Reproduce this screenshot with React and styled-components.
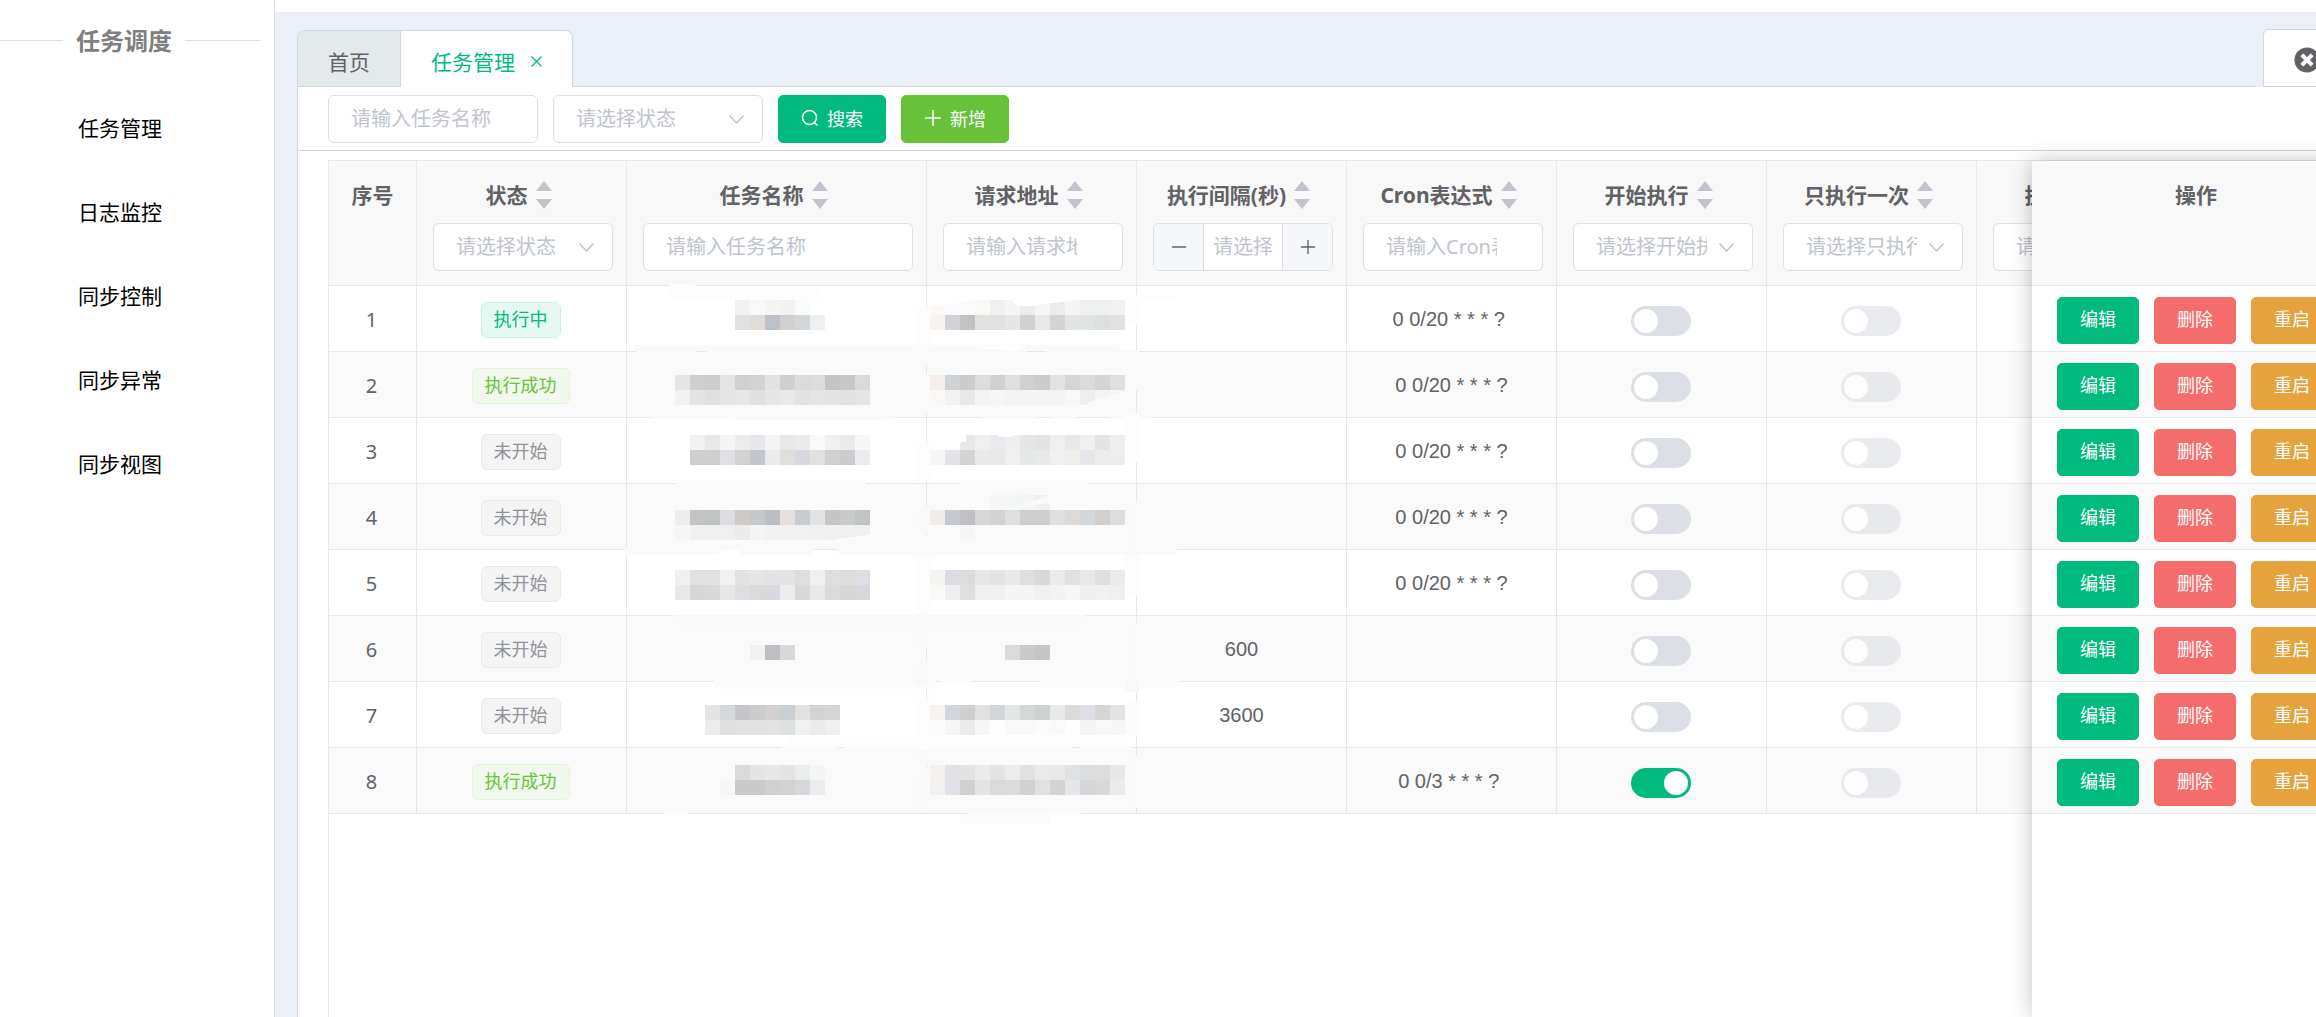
import React from "react";
import styled, { createGlobalStyle } from "styled-components";
import { FaTimesCircle } from "react-icons/fa";

const color = {
  primary: "#00bb7d",
  success: "#67c23a",
  danger: "#f56c6c",
  warning: "#e6a23c",
  text: "#606266",
  placeholder: "#c0c4cc",
  border: "#dcdfe6",
  frame: "#cfd7e5",
  grid: "#e8e8e8",
  canvas: "#eaeff8",
};

const GlobalStyle = createGlobalStyle`
  *, *::before, *::after { box-sizing: border-box; }
  body {
    margin: 0;
    background: #fff;
    color: ${color.text};
    font-family: "Noto Sans", "Noto Sans CJK SC", sans-serif;
    font-size: 20px;
  }
  button, input, select { font: inherit; margin: 0; }
`;

/* ---------- shell ---------- */

const Shell = styled.div`
  display: flex;
  height: 100vh;
  overflow: hidden;
`;

const Sidebar = styled.aside`
  flex: 0 0 275px;
  border-right: 1px solid ${color.border};
  background: #fff;
`;

const SidebarTitle = styled.h1`
  display: flex;
  align-items: center;
  gap: 13px;
  height: 80px;
  margin: 0 0 5px;
  padding-right: 14px;
  font-family: "Noto Sans CJK SC", sans-serif;
  font-size: 24px;
  font-weight: 700;
  line-height: 32px;
  color: #7f7f7f;
  &::before,
  &::after {
    content: "";
    height: 1px;
    background: ${color.border};
  }
  &::before { flex: 0 0 63px; }
  &::after { flex: 1; }
`;

const NavLink = styled.a`
  display: flex;
  align-items: center;
  height: 84px;
  padding-left: 78px;
  font-family: "Noto Sans CJK SC", sans-serif;
  font-size: 21px;
  color: #000;
  text-decoration: none;
`;

const Main = styled.main`
  display: flex;
  flex: 0 0 calc(100% - 200px);
  min-width: 0;
  flex-direction: column;
  padding-left: 22px;
  background: ${color.canvas};
`;

const TopBand = styled.div`
  flex: 0 0 12px;
  margin-left: -22px;
  background: #fff;
`;

/* ---------- tabs ---------- */

const TabBar = styled.div`
  display: flex;
  align-items: flex-end;
  margin-top: 17px;
`;

const TabGroup = styled.div`
  display: flex;
  height: 57px;
  overflow: hidden;
  border: 1px solid ${color.frame};
  border-bottom: 0;
  border-radius: 8px 8px 0 0;
`;

const Tab = styled.button`
  display: flex;
  align-items: center;
  gap: 16px;
  padding: 4px 30px 0;
  border: 0;
  font-size: 21px;
  color: ${(p) => (p.$active ? color.primary : color.text)};
  background: ${(p) => (p.$active ? "#fff" : "#e4e9ec")};
  ${(p) =>
    !p.$active &&
    `border-right: 1px solid ${color.frame}; border-bottom: 1px solid ${color.frame};`}
`;

const TabRule = styled.div`
  flex: 1;
  height: 57px;
  border-bottom: 1px solid ${color.frame};
`;

const TabAction = styled.button`
  display: flex;
  align-items: center;
  width: 98px;
  height: 58px;
  margin: 0 30px 0 7px;
  padding: 4px 0 0 30px;
  border: 1px solid ${color.frame};
  border-radius: 6px 6px 0 0;
  background: #fff;
  color: ${color.text};
`;

/* ---------- panel ---------- */

const Panel = styled.section`
  display: flex;
  flex: 1;
  flex-direction: column;
  min-height: 0;
  border-left: 1px solid ${color.frame};
  background: #fff;
`;

const Toolbar = styled.form`
  display: flex;
  gap: 15px;
  padding: 8px 30px 7px;
  border-bottom: 1px solid ${color.frame};
`;

const Field = styled.div`
  position: relative;
  width: ${(p) => p.$width || "100%"};
  height: 48px;
`;

const TextBox = styled.input`
  display: block;
  width: 100%;
  height: 48px;
  padding: 0 ${(p) => (p.$clearable ? 45 : 22)}px 2px 22px;
  border: 1px solid ${color.border};
  border-radius: 6px;
  background: #fff;
  color: ${color.text};
  &::placeholder { color: ${color.placeholder}; opacity: 1; }
`;

const SelectBox = styled.select`
  display: block;
  width: 100%;
  height: 48px;
  padding: 0 45px 2px 22px;
  border: 1px solid ${color.border};
  border-radius: 6px;
  background: #fff;
  color: ${color.placeholder};
  appearance: none;
`;

const Chevron = styled.svg`
  position: absolute;
  top: 16px;
  right: 18px;
  width: 17px;
  height: 17px;
  pointer-events: none;
`;

const Button = styled.button`
  display: inline-flex;
  align-items: center;
  justify-content: center;
  gap: 8px;
  height: ${(p) => (p.$small ? 47 : 48)}px;
  padding: 0 22px 2px;
  border: 1px solid ${(p) => color[p.$kind]};
  border-radius: 5px;
  background: ${(p) => color[p.$kind]};
  color: #fff;
  font-size: 18px;
  white-space: nowrap;
`;

/* ---------- table ---------- */

const Grid = styled.div`
  display: flex;
  flex: 1;
  min-height: 0;
  margin: 9px 30px 0;
  border: solid ${color.grid};
  border-width: 1px 0 0 1px;
`;

const ScrollPane = styled.div`
  position: relative;
  flex: 1;
  min-width: 0;
  overflow: hidden;
`;

const FixedPane = styled.div`
  position: relative;
  flex: 0 0 329px;
  background: #fff;
  box-shadow: 0 0 20px rgba(0, 0, 0, 0.24);
`;

const Table = styled.table`
  width: ${(p) => p.$width};
  table-layout: fixed;
  border-collapse: separate;
  border-spacing: 0;
`;

const HeadCell = styled.th`
  height: 125px;
  padding: 18px 13px 0 16px;
  border: solid ${color.grid};
  border-width: 0 1px 1px 0;
  background: #f8f8f8;
  font-weight: 400;
  text-align: center;
  vertical-align: top;
`;

const HeadLabel = styled.div`
  display: flex;
  align-items: center;
  justify-content: center;
  margin: 0 -13px 12px -16px;
  font-size: 21px;
  font-weight: 700;
  line-height: 32px;
  white-space: nowrap;
`;

const SortButton = styled.button`
  display: flex;
  width: 30px;
  padding: 0 6px 0 8px;
  border: 0;
  background: none;
`;

const Cell = styled.td`
  height: 66px;
  padding: 3px 2px 0 0;
  border: solid ${color.grid};
  border-width: 0 1px 1px 0;
  line-height: 30px;
  text-align: center;
  ${(p) => p.$plain && 'font-family: "Liberation Sans", Arial, sans-serif; padding: 0;'}
`;

const Row = styled.tr`
  background: #fff;
  &:nth-child(even) { background: #fafafa; }
`;

const tagTone = {
  running: `color: ${color.primary}; background: #e6f8f2; border-color: #ccf1e5;`,
  done: `color: ${color.success}; background: #f0f9eb; border-color: #e1f3d8;`,
  idle: `color: #909399; background: #f4f4f5; border-color: #e9e9eb;`,
};

const Tag = styled.span`
  display: inline-block;
  height: 36px;
  padding: 0 12px;
  border: 1px solid;
  border-radius: 6px;
  font-size: 18px;
  line-height: 33px;
  vertical-align: middle;
  ${(p) => tagTone[p.$tone]}
`;

const Switch = styled.input.attrs({ type: "checkbox", role: "switch" })`
  position: relative;
  display: block;
  width: 60px;
  height: 30px;
  margin: 1px auto 0;
  padding: 3px;
  border-radius: 15px;
  background: ${color.border};
  appearance: none;
  &::before {
    content: "";
    display: block;
    width: 24px;
    height: 24px;
    border-radius: 50%;
    background: #fff;
  }
  &:checked { background: ${color.primary}; }
  &:checked::before { margin-left: auto; }
  &:disabled { opacity: 0.6; }
`;

const Actions = styled.div`
  display: flex;
  justify-content: center;
  gap: 15px;
`;

const Stepper = styled.div`
  display: flex;
  height: 48px;
  overflow: hidden;
  border: 1px solid ${color.border};
  border-radius: 6px;
  background: #fff;
`;

const StepButton = styled.button`
  display: flex;
  flex: 0 0 49px;
  align-items: center;
  justify-content: center;
  padding: 0;
  border: 0;
  background: #f5f7fa;
`;

const StepInput = styled.input`
  flex: 1;
  min-width: 0;
  padding: 0 9px 2px;
  border: solid ${color.border};
  border-width: 0 1px;
  &::placeholder { color: ${color.placeholder}; opacity: 1; }
`;

/* Redaction layer lying over the name and address columns. */
const Redaction = styled.svg`
  position: absolute;
  top: 119px;
  left: 291px;
  width: 580px;
  height: 560px;
  pointer-events: none;
`;

/* ---------- data ---------- */

const menu = ["任务管理", "日志监控", "同步控制", "同步异常", "同步视图"];

const columns = [
  { title: "序号", width: 88 },
  { title: "状态", width: 210, filter: "select", hint: "请选择状态" },
  { title: "任务名称", width: 300, filter: "text", hint: "请输入任务名称" },
  { title: "请求地址", width: 210, filter: "text", hint: "请输入请求地址" },
  { title: "执行间隔(秒)", width: 210, filter: "number", hint: "请选择执行间隔" },
  { title: "Cron表达式", width: 210, filter: "text", hint: "请输入Cron表达式" },
  { title: "开始执行", width: 210, filter: "select", hint: "请选择开始执行" },
  { title: "只执行一次", width: 210, filter: "select", hint: "请选择只执行一次" },
  { title: "执行结果", width: 210, filter: "select", hint: "请选择执行结果" },
];

const tableWidth = columns.reduce((sum, c) => sum + c.width, 0);

const status = { running: "执行中", done: "执行成功", idle: "未开始" };

const rows = [
  { id: 1, status: "running", cron: "0 0/20 * * * ?\u00a0" },
  { id: 2, status: "done", cron: "0 0/20 * * * ?" },
  { id: 3, status: "idle", cron: "0 0/20 * * * ?" },
  { id: 4, status: "idle", cron: "0 0/20 * * * ?" },
  { id: 5, status: "idle", cron: "0 0/20 * * * ?" },
  { id: 6, status: "idle", interval: "600" },
  { id: 7, status: "idle", interval: "3600" },
  { id: 8, status: "done", cron: "0 0/3 * * * ?\u00a0", on: true },
];

/* Smears: x, y, width, height, fill */
const smears = [
  [50, 4, 25, 5, "#fdfdfd"], [50, 8, 150, 11, "#fdfdfd"],
  [14, 65, 485, 6, "#fafafa"], [16, 70, 61, 3, "#fafafa"], [87, 70, 319, 3, "#fafafa"],
  [426, 70, 92, 3, "#fafafa"], [30, 136, 245, 3, "#fafafa"], [115, 138, 152, 2, "#fafafa"],
  [362, 136, 56, 3, "#fafafa"], [430, 136, 27, 3, "#fafafa"], [490, 136, 42, 3, "#fafafa"],
  [56, 200, 190, 5, "#fafafa"], [341, 200, 126, 5, "#fafafa"],
  [5, 267, 189, 8, "#fafafa"], [218, 267, 339, 8, "#fafafa"],
  [53, 335, 413, 14, "#f9f9f9"], [94, 400, 222, 9, "#fcfcfc"], [319, 400, 34, 3, "#fcfcfc"],
  [420, 400, 140, 7, "#fcfcfc"], [162, 466, 56, 3, "#fcfcfc"], [169, 456, 340, 9, "#fdfdfd"],
  [225, 466, 227, 3, "#fcfcfc"], [460, 466, 52, 3, "#fcfcfc"],
  [45, 532, 22, 3, "#fdfdfd"], [349, 532, 112, 3, "#fcfcfc"], [340, 535, 90, 9, "#fcfcfc"],
  [295, 27, 15, 38, "#fdfdfd"], [295, 65, 15, 21, "#f9fafa"], [295, 94, 15, 40, "#f9fafa"],
  [295, 163, 15, 38, "#fdfdfd"], [295, 226, 15, 28, "#f9f9f9"], [295, 257, 15, 18, "#fafafa"],
  [295, 275, 15, 60, "#fdfdfd"], [295, 335, 15, 33, "#f9f9f9"], [295, 381, 15, 24, "#f9f9f9"],
  [295, 419, 15, 51, "#fdfdfd"], [295, 470, 15, 14, "#f9f9f9"], [295, 489, 15, 43, "#f9f9f9"],
  [505, 15, 52, 5, "#fdfdfd"], [505, 15, 14, 30, "#fdfdfd"], [505, 70, 14, 40, "#f9fafa"],
  [505, 133, 14, 49, "#fdfdfd"], [505, 222, 14, 53, "#f9f9f9"], [505, 275, 14, 40, "#fdfdfd"],
  [505, 343, 14, 30, "#f9f9f9"], [505, 373, 14, 39, "#f9f9f9"], [505, 422, 14, 34, "#fcfcfc"],
  [505, 475, 14, 53, "#f9f9f9"],
];

/* Mosaic strips of 15px blocks: x, y, block colours */
const mosaic = [
  [115, 20, "f2f2f2 f8f8f8 f4f4f5 f2f2f2 fbfdfc"],
  [115, 35, "e1e1e3 e1dbd8 bcc1c8 d4cfcf d2d6d9 edeff0"],
  [310, 20, "fcfaf8 f8fafb fafafa f8f8f5 f0f0f0 f5f5f5 ececec f5f7f6 ececec f5f5f5 eef1f0 eef1f0 f1f1f1"],
  [310, 35, "f8f4f1 d1d2d6 c2c2c4 e1e1e1 e1e1e1 e6e6e6 d0d1d3 e8e8e8 d4d3d1 e4e4e6 dfe4e5 dddee0 e3e1df"],
  [55, 95, "e6e5e3 cdcfd0 cdcdcd e5e5e5 cfd0d2 d2d2d2 e1e2e4 cfcfcf d9dbdd dfdddb c4c6c5 c5c9cc dadada"],
  [55, 110, "f0f1f1 e3e5e5 e0e0e0 e4e6e6 e7e7e7 e0e0e0 e5e7e6 e9e9e9 e0e2e4 e5e5e5 e5e4e2 e1e2e4 e5e5e5"],
  [310, 95, "f3eeeb cfd2d5 cbccce dedddb d0d1d3 dedfe1 cfd0d2 cbccce e2e4e3 d7d5d3 d8dcdf d5d4d2 dedfe1"],
  [310, 110, "f9f8f6 f1f1f2 e8e8e8 f3f3f3 f6f6f6 f3f3f2 f3f3f2 f3f3f3 f3f3f3 f8f8f8 eeeeee f4f4f4 f6f6f6"],
  [70, 155, "f1f1f1 e8e8e8 f4f6f6 ececec e5e7ea f4f4f4 e8e8e8 e9ebed f9f9f9 f0f0f0 eaeaea f7f7f7"],
  [70, 170, "cfcfcf cdced0 e0e1e4 d3d2d0 c3c7cd ebebeb e0dedd d7d9de e1e1e1 d0d0d0 cccccc ebecef"],
  [340, 155, "e8e8e8 f0eeee e8eaed eeeeef e5e7e7 e1e4e2 eeeff1 e9e8e6 f0f0f0 e5e4e2 eeeeee"],
  [310, 170, "f9f7f5 e2e3e9 d3d3d3 e8eae9 e8e8e8 f0f0f0 e5e8e7 e7e9eb f0f0f1 efeeec e6e7ea ededed ededed"],
  [370, 215, "f6f6f6 f5f6f6 f3f6f5 f0f0f0"],
  [55, 230, "edecea c2c3c5 c1c2c4 dcdde0 cdcac7 c6c8cd bcbec4 e6e1dd c9cdd1 e1e3e5 c4c5c7 c9cacc c2c3c5"],
  [55, 245, "f5f6f6 eeefef eeefef eeefef ebebeb f3f4f4 f0f1f1 f1f1f1 f0f1f1 eef1f0 efefef eef0ef eef0ef"],
  [310, 230, "f1ece9 c6c9cf bfc0c3 d7d7d7 d2d3d5 dedfe1 cdcfce ced0d0 dde0de dcdad8 d3d7da d1d0ce dcdedd"],
  [340, 245, "f6f6f6"],
  [55, 290, "f1f0ee e0e1e3 e1e1e1 f1f1f1 e2e2e2 e5e5e5 e2e3e5 e3e4e5 dcdee0 eef1f0 dcdee0 dedcda dcdee1"],
  [55, 305, "e8e8e8 d6d6d6 d9d9d9 e7e7e7 dcdee2 d9dadc d7d9de ededed d9d9d9 e9e9e7 d8dadc d7d5d5 d7d8dd"],
  [310, 290, "f7f5f2 dcdde2 dcdcdc e7e7e7 e2e3e5 e8e9eb dcdfdd d8d9d9 ebebed e2e1df e6e8ea dfdfdf e9eaec"],
  [310, 305, "fbf9f6 edeef1 dfdfdf f0f0f0 efefef f5f5f5 f3f4f3 eff1f0 f2f2f2 f6f6f6 edeef1 f1f1f1 efefef"],
  [130, 365, "f3f2f0 bebfc4 d8dad9"],
  [385, 365, "dadada cacacc c5c6c8"],
  [85, 425, "e4e4e4 d6d7d9 c4c6c8 ccccce d4d0d0 cacfd2 e1e1e0 d3d3d3 d5d6d7"],
  [85, 440, "ececec dfe0e2 e2e2e2 e2e2e2 e3e3e3 dde1e2 f1f1f1 ebebec eff0f2"],
  [310, 425, "f7f3f0 d2d5db cfcfd1 e3e1df d4d5d6 e5e6e8 d5d8d6 cfd0d0 e8e9eb dddbd9 dee0e6 d6d6d6 e2e3e5"],
  [310, 440, "fdfcfb f6f6f6 ebebeb f7f7f7 fefefe f9f9f9 f9f9f9 fbfcfb fafafa fefefe f4f5f6 f8f8f8 f7f7f7"],
  [115, 485, "dadada e2e4e6 e7e7e7 e3e3e3 ebedef f4f6f6"],
  [100, 500, "f9f7f5 cacacc cacacc cfd0d2 d4d2d0 d5d7d9 ebecef"],
  [310, 485, "f4f1ef e0e1e2 e2e2e2 ecebe9 e3e4e6 ececec e0e2e1 eaeaea e9e9e9 dfe1e4 dadcdf dddddd e7e7e7"],
  [310, 500, "f3f1ef dfe1e6 d0d0d2 e4e4e4 dadada d9dbdd cfd1d3 e1e1e1 d3d3d3 e5e6e9 d4d6d8 d9d9d9 eaebea"],
];

/* Irregular brush edges over the mosaic */
const brush = [
  ["#fff", "310,20 358,20 310,27"],
  ["#fff", "391,20 398,26 412,26 434,23 458,20"],
  ["#fafafa", "505,112 480,118 468,123 467,126 505,126"],
  ["#fff", "310,154 346,154 346,162 336,163 325,163 310,165"],
  ["#fff", "376,154 400,154 390,157 380,157"],
  ["#fafafa", "386,231 430,215 430,223 388,229"],
  ["#fafafa", "250,255 250,261 207,261 230,257"],
  ["#fff", "360,66 407,66 396,71 360,68"],
  ["#fff", "193,272 215,270 194,275"],
  ["#fff", "97,275 102,270 119,270 121,275"],
];

/* ---------- small parts ---------- */

const DownIcon = () => (
  <Chevron viewBox="0 0 17 17" aria-hidden="true">
    <path d="M1.5 4.5 8.5 12 15.5 4.5" fill="none" stroke={color.placeholder} strokeWidth="1.5" />
  </Chevron>
);

const SortIcon = () => (
  <svg width="16" height="28" viewBox="0 0 16 28" aria-hidden="true">
    <path d="M0 10 8 0l8 10zM0 18h16l-8 10z" fill={color.placeholder} />
  </svg>
);

const SearchIcon = () => (
  <svg width="18" height="18" viewBox="0 0 18 18" aria-hidden="true">
    <g fill="none" stroke="#fff" strokeWidth="1.5">
      <circle cx="8.5" cy="8.5" r="7" />
      <path d="m13.5 13.5 3 3" />
    </g>
  </svg>
);

const PlusIcon = ({ stroke = "#fff", size = 18 }) => (
  <svg width={size} height={size} viewBox="0 0 18 18" aria-hidden="true">
    <path d="M1 9h16M9 1v16" fill="none" stroke={stroke} strokeWidth="1.5" />
  </svg>
);

const MinusIcon = () => (
  <svg width="16" height="16" viewBox="0 0 18 18" aria-hidden="true">
    <path d="M1 9h16" fill="none" stroke={color.text} strokeWidth="1.5" />
  </svg>
);

const CloseIcon = () => (
  <svg width="11" height="11" viewBox="0 0 11 11" aria-hidden="true">
    <path d="m.5.5 10 10m0-10-10 10" fill="none" stroke="currentColor" strokeWidth="1.2" />
  </svg>
);

function Select({ hint, width }) {
  return (
    <Field $width={width}>
      <SelectBox aria-label={hint} defaultValue="">
        <option value="">{hint}</option>
      </SelectBox>
      <DownIcon />
    </Field>
  );
}

function Filter({ kind, hint }) {
  if (kind === "select") return <Select hint={hint} />;
  if (kind === "text") return <TextBox $clearable aria-label={hint} placeholder={hint} />;
  if (kind === "number")
    return (
      <Stepper>
        <StepButton type="button" aria-label="减少"><MinusIcon /></StepButton>
        <StepInput aria-label={hint} placeholder={hint} />
        <StepButton type="button" aria-label="增加"><PlusIcon stroke={color.text} size={16} /></StepButton>
      </Stepper>
    );
  return null;
}

function Mosaic() {
  return (
    <Redaction viewBox="0 0 580 560" shapeRendering="crispEdges" aria-hidden="true">
      {smears.map(([x, y, w, h, fill], i) => (
        <rect key={i} x={x} y={y} width={w} height={h} fill={fill} />
      ))}
      {mosaic.map(([x, y, blocks]) =>
        blocks.split(" ").map((c, i) => (
          <rect key={`${x}-${y}-${i}`} x={x + i * 15} y={y} width="15" height="15" fill={`#${c}`} />
        ))
      )}
      {brush.map(([fill, points], i) => (
        <polygon key={i} points={points} fill={fill} />
      ))}
    </Redaction>
  );
}

function TaskTable() {
  return (
    <Grid>
      <ScrollPane>
        <Table $width={`${tableWidth}px`}>
          <colgroup>
            {columns.map((c) => <col key={c.title} width={c.width} />)}
          </colgroup>
          <thead>
            <tr>
              {columns.map((c) => (
                <HeadCell key={c.title} scope="col">
                  <HeadLabel>
                    {c.title}
                    {c.filter && (
                      <SortButton type="button" aria-label={`${c.title}排序`}><SortIcon /></SortButton>
                    )}
                  </HeadLabel>
                  <Filter kind={c.filter} hint={c.hint} />
                </HeadCell>
              ))}
            </tr>
          </thead>
          <tbody>
            {rows.map((r) => (
              <Row key={r.id}>
                <Cell>{r.id}</Cell>
                <Cell><Tag $tone={r.status}>{status[r.status]}</Tag></Cell>
                <Cell />
                <Cell />
                <Cell $plain>{r.interval}</Cell>
                <Cell $plain>{r.cron}</Cell>
                <Cell><Switch aria-label="开始执行" defaultChecked={r.on} /></Cell>
                <Cell><Switch aria-label="只执行一次" disabled /></Cell>
                <Cell />
              </Row>
            ))}
          </tbody>
        </Table>
        <Mosaic />
      </ScrollPane>
      <FixedPane>
        <Table $width="100%">
          <thead>
            <tr><HeadCell scope="col"><HeadLabel>操作</HeadLabel></HeadCell></tr>
          </thead>
          <tbody>
            {rows.map((r) => (
              <Row key={r.id}>
                <Cell>
                  <Actions>
                    <Button type="button" $small $kind="primary">编辑</Button>
                    <Button type="button" $small $kind="danger">删除</Button>
                    <Button type="button" $small $kind="warning">重启</Button>
                  </Actions>
                </Cell>
              </Row>
            ))}
          </tbody>
        </Table>
      </FixedPane>
    </Grid>
  );
}

export default function App() {
  return (
    <>
      <GlobalStyle />
      <Shell>
        <Sidebar>
          <SidebarTitle>任务调度</SidebarTitle>
          <nav>
            {menu.map((m) => <NavLink key={m} href="#">{m}</NavLink>)}
          </nav>
        </Sidebar>
        <Main>
          <TopBand />
          <TabBar>
            <TabGroup>
              <Tab type="button">首页</Tab>
              <Tab type="button" $active>任务管理<CloseIcon /></Tab>
            </TabGroup>
            <TabRule />
            <TabAction type="button" aria-label="关闭标签"><FaTimesCircle size={26} /></TabAction>
          </TabBar>
          <Panel>
            <Toolbar>
              <Field $width="210px">
                <TextBox aria-label="请输入任务名称" placeholder="请输入任务名称" />
              </Field>
              <Select hint="请选择状态" width="210px" />
              <Button type="button" $kind="primary"><SearchIcon />搜索</Button>
              <Button type="button" $kind="success"><PlusIcon />新增</Button>
            </Toolbar>
            <TaskTable />
          </Panel>
        </Main>
      </Shell>
    </>
  );
}
